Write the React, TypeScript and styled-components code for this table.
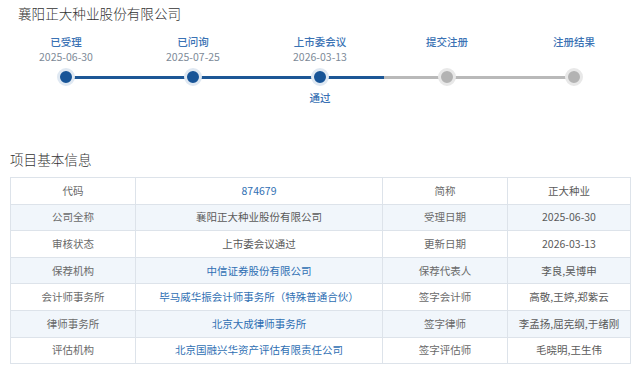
import React from "react";
import styled, { createGlobalStyle } from "styled-components";

const GlobalStyle = createGlobalStyle`
  html, body {
    margin: 0;
    padding: 0;
    background: #fff;
    font-family: "Noto Sans CJK SC", "Noto Sans", sans-serif;
  }
`;

const Page = styled.div`
  width: 640px;
  height: 368px;
  overflow: hidden;
  position: relative;
`;

const CompanyTitle = styled.h1`
  margin: 0;
  padding: 4px 0 0 18px;
  font-size: 13.6px;
  line-height: 18px;
  font-weight: 300;
  color: #333;
`;

const Steps = styled.div`
  display: grid;
  grid-template-columns: repeat(5, 127px);
  margin: 13px 0 0 2.5px;
`;

const Step = styled.div`
  display: flex;
  flex-direction: column;
  align-items: center;
`;

const StepName = styled.div`
  font-size: 10.5px;
  line-height: 14px;
  height: 14px;
  color: #3a72b4;
  font-weight: 500;
`;

const StepDate = styled.div`
  font-size: 10.5px;
  line-height: 14px;
  height: 14px;
  margin-top: 1px;
  color: #7d8a98;
`;

const Track = styled.div`
  position: relative;
  width: 100%;
  height: 20px;
  margin-top: 3px;
  display: flex;
  align-items: center;
`;

const Segment = styled.div<{ $color: string; $visible: boolean }>`
  flex: 1;
  height: 3px;
  background: ${(p) => (p.$visible ? p.$color : "transparent")};
`;

const Node = styled.span<{ $done: boolean }>`
  position: absolute;
  left: 50%;
  top: 50%;
  width: 12px;
  height: 12px;
  margin: -9px 0 0 -9px;
  border-radius: 50%;
  background: ${(p) => (p.$done ? "#175497" : "#b3b3b3")};
  border: 3px solid ${(p) => (p.$done ? "#dfe8f2" : "#e8e8e8")};
`;

const StepNote = styled.div`
  font-size: 10.5px;
  line-height: 14px;
  height: 14px;
  margin-top: 4px;
  color: #3a72b4;
  font-weight: 500;
`;

const SectionTitle = styled.h2`
  margin: 0;
  padding: 45px 0 0 10px;
  font-size: 13.6px;
  line-height: 18px;
  font-weight: 300;
  color: #333;
`;

const Table = styled.table`
  margin: 9px 0 0 10px;
  width: 620px;
  border-collapse: collapse;
  table-layout: fixed;
  border: 1px solid #dde3ea;
`;

const Row = styled.tr<{ $shaded: boolean }>`
  height: 26.6px;
  background: ${(p) => (p.$shaded ? "#f1f6fb" : "#fff")};
`;

const Cell = styled.td<{ $tone: "label" | "text" | "link" }>`
  border: 1px solid #dde3ea;
  padding: 0;
  text-align: center;
  font-size: 10.5px;
  line-height: 14px;
  white-space: nowrap;
  color: ${(p) =>
    p.$tone === "link" ? "#2f6fb3" : p.$tone === "label" ? "#6a6a6a" : "#5a5a5a"};
`;

const BLUE = "#1d5796";
const GREY = "#b9b9b9";

const steps = [
  { name: "已受理", date: "2025-06-30", done: true },
  { name: "已问询", date: "2025-07-25", done: true },
  { name: "上市委会议", date: "2026-03-13", done: true, note: "通过" },
  { name: "提交注册", date: "", done: false },
  { name: "注册结果", date: "", done: false },
];

type Val = { text: string; link?: boolean };
const rows: [string, Val, string, Val][] = [
  ["代码", { text: "874679", link: true }, "简称", { text: "正大种业" }],
  ["公司全称", { text: "襄阳正大种业股份有限公司" }, "受理日期", { text: "2025-06-30" }],
  ["审核状态", { text: "上市委会议通过" }, "更新日期", { text: "2026-03-13" }],
  ["保荐机构", { text: "中信证券股份有限公司", link: true }, "保荐代表人", { text: "李良,吴博申" }],
  ["会计师事务所", { text: "毕马威华振会计师事务所（特殊普通合伙）", link: true }, "签字会计师", { text: "高敬,王婷,郑紫云" }],
  ["律师事务所", { text: "北京大成律师事务所", link: true }, "签字律师", { text: "李孟扬,屈宪纲,于绪刚" }],
  ["评估机构", { text: "北京国融兴华资产评估有限责任公司", link: true }, "签字评估师", { text: "毛晓明,王生伟" }],
];

export default function App() {
  return (
    <Page>
      <GlobalStyle />
      <CompanyTitle>襄阳正大种业股份有限公司</CompanyTitle>
      <Steps>
        {steps.map((s, i) => {
          const next = steps[i + 1];
          return (
            <Step key={s.name}>
              <StepName>{s.name}</StepName>
              <StepDate>{s.date}</StepDate>
              <Track>
                <Segment $visible={i > 0} $color={s.done ? BLUE : GREY} />
                <Segment $visible={!!next} $color={s.done ? BLUE : GREY} />
                <Node $done={s.done} />
              </Track>
              <StepNote>{s.note ?? ""}</StepNote>
            </Step>
          );
        })}
      </Steps>
      <SectionTitle>项目基本信息</SectionTitle>
      <Table>
        <colgroup>
          <col style={{ width: 125 }} />
          <col style={{ width: 247 }} />
          <col style={{ width: 125 }} />
          <col style={{ width: 123 }} />
        </colgroup>
        <tbody>
          {rows.map(([l1, v1, l2, v2], i) => (
            <Row key={l1} $shaded={i % 2 === 1}>
              <Cell $tone="label">{l1}</Cell>
              <Cell $tone={v1.link ? "link" : "text"}>{v1.text}</Cell>
              <Cell $tone="label">{l2}</Cell>
              <Cell $tone={v2.link ? "link" : "text"}>{v2.text}</Cell>
            </Row>
          ))}
        </tbody>
      </Table>
    </Page>
  );
}
